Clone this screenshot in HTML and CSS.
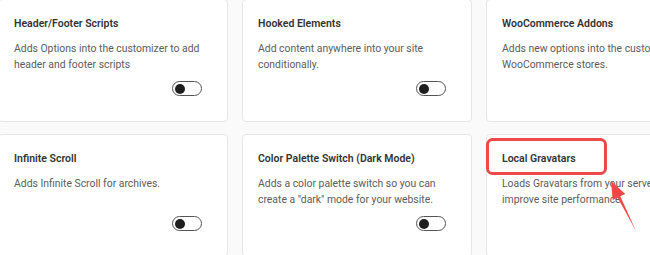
FILE: index.html
```html
<!DOCTYPE html>
<html>
<head>
<meta charset="utf-8">
<link rel="stylesheet" href="styles.css">
</head>
<body>
<div class="grid">
  <div class="card">
    <div class="title">Header/Footer Scripts</div>
    <div class="desc">Adds Options into the customizer to add header and footer scripts</div>
    <span class="toggle"><span class="knob"></span></span>
  </div>
  <div class="card">
    <div class="title">Hooked Elements</div>
    <div class="desc">Add content anywhere into your site conditionally.</div>
    <span class="toggle"><span class="knob"></span></span>
  </div>
  <div class="card">
    <div class="title">WooCommerce Addons</div>
    <div class="desc">Adds new options into the customizer for WooCommerce stores.</div>
    <span class="toggle"><span class="knob"></span></span>
  </div>
  <div class="card">
    <div class="title">Infinite Scroll</div>
    <div class="desc">Adds Infinite Scroll for archives.</div>
    <span class="toggle"><span class="knob"></span></span>
  </div>
  <div class="card">
    <div class="title">Color Palette Switch (Dark Mode)</div>
    <div class="desc">Adds a color palette switch so you can create a "dark" mode for your website.</div>
    <span class="toggle"><span class="knob"></span></span>
  </div>
  <div class="card">
    <div class="title">Local Gravatars</div>
    <div class="desc">Loads Gravatars from your server to improve site performance.</div>
    <span class="toggle"><span class="knob"></span></span>
  </div>
</div>
<svg class="annot" width="650" height="255" viewBox="0 0 650 255">
  <rect x="487.5" y="139.5" width="118" height="34" rx="5" ry="5" fill="none" stroke="#f04848" stroke-width="3"/>
  <polygon points="611,181 625.3,193.9 620.3,196.3 636,231 617.7,197.7 612.7,200.1" fill="#f04848"/>
</svg>
</body>
</html>
```

FILE: styles.css
```css
html, body {
  margin: 0;
  padding: 0;
  background: #fafafa;
  overflow: hidden;
  width: 650px;
  height: 255px;
}
body {
  position: relative;
  font-family: Roboto, "Liberation Sans", sans-serif;
}
.grid {
  display: grid;
  grid-template-columns: 230px 230px 230px;
  grid-auto-rows: 123px;
  column-gap: 14px;
  row-gap: 12px;
  margin-left: -2px;
  margin-top: -1px;
  width: 800px;
}
.card {
  background: #fff;
  border: 1px solid #e6e6e6;
  border-radius: 4px;
  box-sizing: border-box;
  padding: 16px 16px 25px 15px;
  display: flex;
  flex-direction: column;
}
.title {
  font-size: 10.5px;
  font-weight: 600;
  line-height: 16px;
  color: #333;
}
.desc {
  margin-top: 9px;
  font-size: 10.4px;
  line-height: 16px;
  color: #5c5c5c;
}
.toggle {
  margin-top: auto;
  align-self: flex-end;
  margin-right: 9px;
  width: 30px;
  height: 15px;
  box-sizing: border-box;
  border: 1.5px solid #555;
  border-radius: 8px;
  display: flex;
  align-items: center;
  padding-left: 2px;
}
.knob {
  width: 10px;
  height: 10px;
  border-radius: 50%;
  background: #1e1e1e;
}
.annot {
  position: absolute;
  left: 0;
  top: 0;
}
```
